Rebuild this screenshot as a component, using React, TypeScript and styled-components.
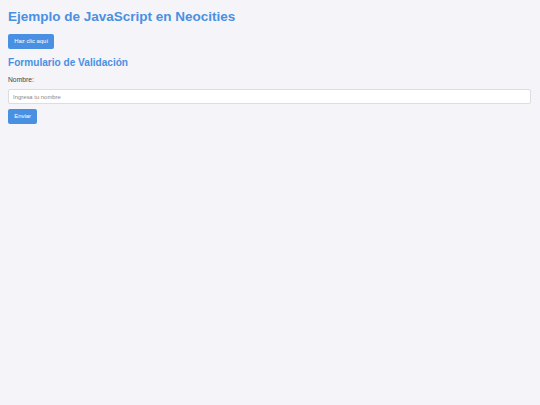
import React from 'react';
import styled, { createGlobalStyle } from 'styled-components';

const GlobalStyle = createGlobalStyle`
  html, body {
    margin: 0;
    padding: 0;
    background: #f4f4f9;
  }

  body {
    font-family: "Liberation Sans", Arial, sans-serif;
    color: #333;
  }
`;

const Page = styled.div`
  display: flex;
  flex-direction: column;
  align-items: flex-start;
  min-height: 405px;
  box-sizing: border-box;
  padding: 9px 9px 8px 8px;
  background: #f4f4f9;
`;

const Title = styled.h1`
  margin: 0 0 10px;
  font-size: 13.5px;
  line-height: 15.1px;
  font-weight: bold;
  color: #4a90e2;
`;

const Button = styled.button`
  display: block;
  margin: 0;
  padding: 4px 6.3px;
  border: none;
  border-radius: 2px;
  background: #4a90e2;
  color: #fff;
  font-family: "Liberation Sans", Arial, sans-serif;
  font-size: 5.9px;
  line-height: 6.5px;
  cursor: pointer;
`;

const Heading = styled.h2`
  margin: 8px 0 8.5px;
  font-size: 10.1px;
  line-height: 11.3px;
  font-weight: bold;
  color: #4a90e2;
`;

const Form = styled.form`
  display: flex;
  flex-direction: column;
  align-items: flex-start;
  align-self: stretch;
`;

const Label = styled.label`
  font-size: 6.75px;
  line-height: 7.5px;
  color: #444;
  margin-bottom: 5.5px;
`;

const Input = styled.input`
  box-sizing: border-box;
  width: 100%;
  height: 15px;
  margin: 0 0 4.7px;
  padding: 0 4px;
  border: 1px solid #ddd;
  border-radius: 2px;
  background: #fff;
  font-family: "Liberation Sans", Arial, sans-serif;
  font-size: 5.9px;
  outline: none;

  &::placeholder {
    color: #888;
  }
`;

export default function App() {
  return (
    <>
      <GlobalStyle />
      <Page>
        <Title>Ejemplo de JavaScript en Neocities</Title>
        <Button type="button">Haz clic aquí</Button>
        <Heading>Formulario de Validación</Heading>
        <Form onSubmit={(e) => e.preventDefault()}>
          <Label htmlFor="nombre">Nombre:</Label>
          <Input id="nombre" type="text" placeholder="Ingresa tu nombre" />
          <Button type="submit">Enviar</Button>
        </Form>
      </Page>
    </>
  );
}
